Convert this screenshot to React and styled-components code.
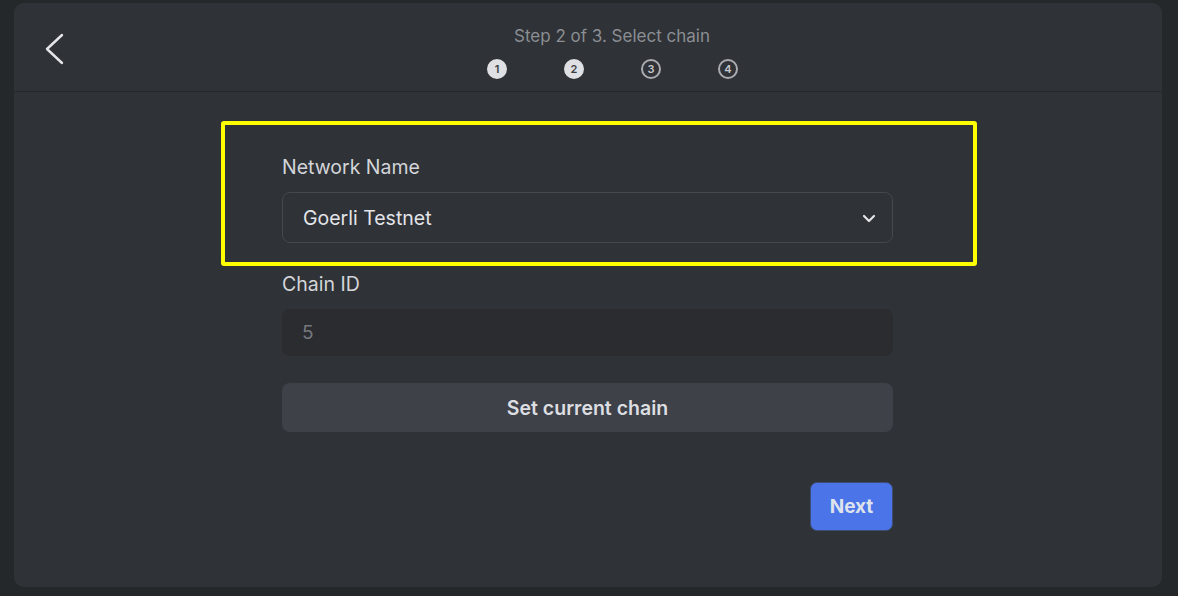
import React from 'react';
import styled, { createGlobalStyle } from 'styled-components';

const GlobalStyle = createGlobalStyle`
  html, body {
    margin: 0;
    padding: 0;
    background: #25282a;
  }
  body {
    font-family: Inter, "Noto Sans", "Liberation Sans", sans-serif;
  }
`;

const Page = styled.div`
  width: 1178px;
  height: 596px;
  box-sizing: border-box;
  padding: 3px 16px 9px 14px;
  display: flex;
`;

const Card = styled.div`
  flex: 1;
  background: #2f3237;
  border-radius: 10px;
  display: flex;
  flex-direction: column;
  overflow: hidden;
`;

const Header = styled.div`
  height: 88px;
  border-bottom: 1px solid #26292c;
  display: grid;
  grid-template-columns: 80px 1fr 80px;
  align-items: start;
`;

const BackButton = styled.button`
  background: none;
  border: none;
  padding: 0;
  margin: 28px 0 0 28px;
  width: 26px;
  height: 36px;
  cursor: pointer;
  display: flex;
  align-items: center;
  justify-content: center;
`;

const StepBlock = styled.div`
  display: flex;
  flex-direction: column;
  align-items: center;
  padding-top: 23px;
  margin-left: 42px;
`;

const StepTitle = styled.p`
  margin: 0 0 0 6px;
  font-size: 17px;
  line-height: 20px;
  color: #8b8e93;
`;

const Dots = styled.div`
  display: flex;
  gap: 57px;
  margin-top: 13px;
  margin-left: 7px;
`;

const Dot = styled.span`
  width: 20px;
  height: 20px;
  box-sizing: border-box;
  border-radius: 50%;
  display: flex;
  align-items: center;
  justify-content: center;
  font-size: 11px;
  font-weight: 600;
  background: ${p => (p.$done ? '#dfe0e3' : 'transparent')};
  border: 2px solid ${p => (p.$done ? '#dfe0e3' : '#a9abb0')};
  color: ${p => (p.$done ? '#3a3d42' : '#c4c6ca')};
`;

const Body = styled.div`
  display: flex;
  justify-content: center;
  padding: 63px 1px 0 0;
`;

const Form = styled.div`
  width: 611px;
  display: flex;
  flex-direction: column;
`;

const Field = styled.div`
  position: relative;
  display: flex;
  flex-direction: column;
  gap: 13px;
  margin-bottom: ${p => p.$space || '0'};
`;

const Highlight = styled.div`
  position: absolute;
  left: -61px;
  right: -84px;
  top: -34px;
  bottom: -23px;
  border: 4px solid #ffff00;
  border-radius: 3px;
  pointer-events: none;
`;

const Label = styled.label`
  font-size: 19.5px;
  line-height: 24px;
  color: #d3d5d9;
`;

const Select = styled.div`
  height: 51px;
  box-sizing: border-box;
  border: 1.5px solid #45484e;
  border-radius: 8px;
  display: flex;
  align-items: center;
  justify-content: space-between;
  padding: 0 16px 0 20px;
  font-size: 19.5px;
  color: #e3e5e9;
`;

const Input = styled.div`
  height: 47px;
  box-sizing: border-box;
  background: #2a2c30;
  border-radius: 8px;
  display: flex;
  align-items: center;
  padding: 0 20px;
  font-size: 19px;
  color: #75787d;
`;

const SetButton = styled.button`
  height: 49px;
  margin-top: -1px;
  border: none;
  border-radius: 8px;
  background: #3e4147;
  color: #dcdee2;
  font-family: inherit;
  font-size: 19.5px;
  font-weight: 600;
  cursor: pointer;
`;

const Footer = styled.div`
  display: flex;
  justify-content: flex-end;
  margin-top: 50px;
`;

const NextButton = styled.button`
  width: 83px;
  height: 49px;
  border: 1.5px solid #3d4d73;
  border-radius: 7px;
  background: #4a74e8;
  color: #dfe3ec;
  font-family: inherit;
  font-size: 19px;
  font-weight: 700;
  cursor: pointer;
`;

const App = () => {
  return (
    <>
      <GlobalStyle />
      <Page>
        <Card>
          <Header>
            <BackButton aria-label="Back">
              <svg width="20" height="32" viewBox="0 0 20 32" fill="none">
                <path d="M17 2 L2 16 L17 30" stroke="#e4e5e8" strokeWidth="2.4" strokeLinecap="round" strokeLinejoin="round" />
              </svg>
            </BackButton>
            <StepBlock>
              <StepTitle>Step 2 of 3. Select chain</StepTitle>
              <Dots>
                <Dot $done>1</Dot>
                <Dot $done>2</Dot>
                <Dot>3</Dot>
                <Dot>4</Dot>
              </Dots>
            </StepBlock>
            <div />
          </Header>
          <Body>
            <Form>
              <Field $space="29px">
                <Highlight />
                <Label>Network Name</Label>
                <Select>
                  <span>Goerli Testnet</span>
                  <svg width="14" height="10" viewBox="0 0 14 10" fill="none">
                    <path d="M2 3 L7 8 L12 3" stroke="#e4e5e8" strokeWidth="2.2" strokeLinecap="round" strokeLinejoin="round" />
                  </svg>
                </Select>
              </Field>
              <Field $space="28px">
                <Label>Chain ID</Label>
                <Input>5</Input>
              </Field>
              <SetButton>Set current chain</SetButton>
              <Footer>
                <NextButton>Next</NextButton>
              </Footer>
            </Form>
          </Body>
        </Card>
      </Page>
    </>
  );
};

export default App;
